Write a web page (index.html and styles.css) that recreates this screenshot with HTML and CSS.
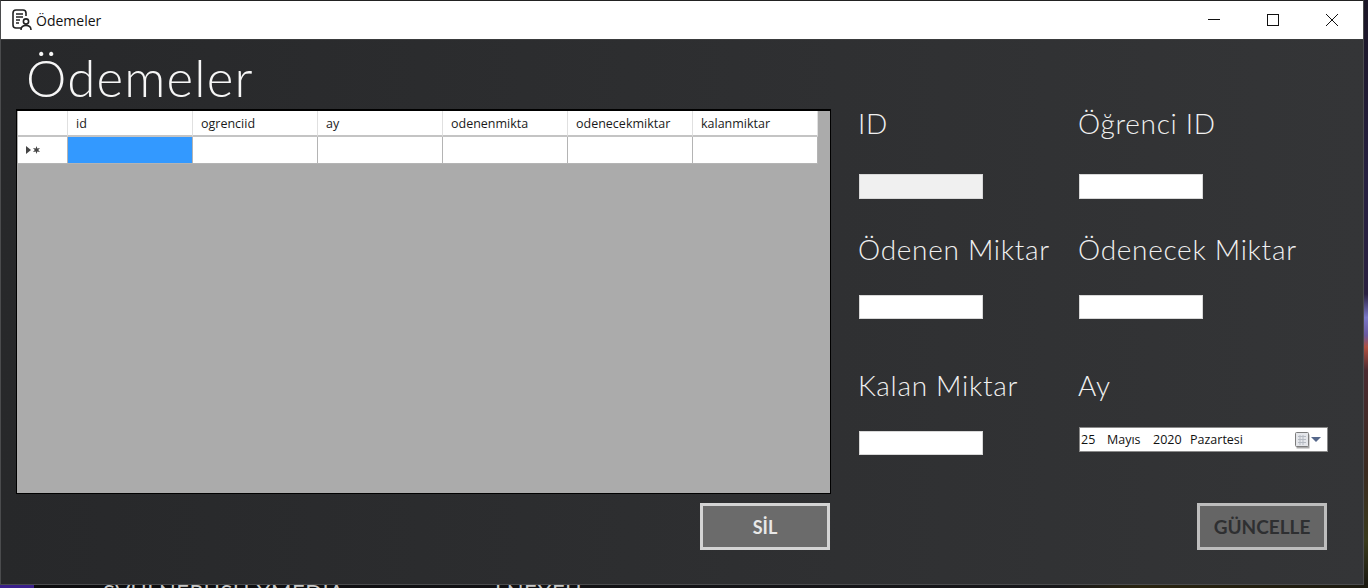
FILE: index.html
```html
<!DOCTYPE html>
<html lang="tr">
	<head>
		<meta charset="UTF-8" />
		<title>Ödemeler</title>
		<link rel="stylesheet" href="styles.css">
	</head>

	<body>
		<div class="window">
			<header class="titlebar">
				<svg class="app-icon" width="22" height="22" viewBox="0 0 22 22" fill="none" stroke="#222" stroke-width="1.6">
					<path d="M10 19H5a3 3 0 0 1-3-3V4a3 3 0 0 1 3-3h7a3 3 0 0 1 3 3v3" />
					<path d="M5 5h7M5 8h7M5 11h4M5 14h3" />
					<circle cx="15" cy="12.500" r="2.600" />
					<path d="M10 21c0-3 2-4.500 5-4.500s5 1.500 5 4.500" />
				</svg>
				<span class="window-title">Ödemeler</span>
				<div class="window-buttons">
					<svg width="12" height="12" viewBox="0 0 12 12" stroke="#111"><path d="M0 5.500h12" /></svg>
					<svg width="12" height="12" viewBox="0 0 12 12" stroke="#111" fill="none"><rect x=".5" y=".5" width="11" height="11" /></svg>
					<svg width="12" height="12" viewBox="0 0 12 12" stroke="#111"><path d="M0 0l12 12M12 0L0 12" /></svg>
				</div>
			</header>

			<div class="content">
				<h1>Ödemeler</h1>
				<div class="main">
					<section class="list-side">
						<div class="grid-panel">
							<table class="data-grid">
								<thead>
									<tr>
										<th class="row-head"></th>
										<th>id</th>
										<th>ogrenciid</th>
										<th>ay</th>
										<th>odenenmikta</th>
										<th>odenecekmiktar</th>
										<th>kalanmiktar</th>
									</tr>
								</thead>
								<tbody>
									<tr>
										<td class="row-head">
											<svg width="15" height="8" viewBox="0 0 15 8" fill="#444"><path d="M0 0l5 4-5 4z" /><path d="M10.500 0l.8 2.500 2.700-.6-1.800 2.100 1.800 2.100-2.700-.6-.8 2.500-.8-2.500-2.700.6 1.800-2.100-1.800-2.100 2.700.6z" /></svg>
										</td>
										<td class="selected"></td>
										<td></td>
										<td></td>
										<td></td>
										<td></td>
										<td></td>
									</tr>
								</tbody>
							</table>
						</div>
						<button class="action-btn delete-btn">SİL</button>
					</section>

					<form class="edit-form">
						<div class="field first">
							<label>ID</label>
							<input class="text-box" type="text" disabled>
						</div>
						<div class="field first">
							<label>Öğrenci ID</label>
							<input class="text-box" type="text">
						</div>
						<div class="field">
							<label>Ödenen Miktar</label>
							<input class="text-box short" type="text">
						</div>
						<div class="field">
							<label>Ödenecek Miktar</label>
							<input class="text-box short" type="text">
						</div>
						<div class="field">
							<label>Kalan Miktar</label>
							<input class="text-box short" type="text">
						</div>
						<div class="field date-field">
							<label>Ay</label>
							<div class="date-picker">
								<span class="date-day">25</span>
								<span class="date-month">Mayıs</span>
								<span class="date-year">2020</span>
								<span>Pazartesi</span>
								<svg class="date-icon" width="28" height="18" viewBox="0 0 28 18">
									<rect x="2.500" y="3.500" width="13" height="14" fill="#aaa" stroke="none" />
									<rect x="1.500" y="1.500" width="13" height="14" rx="1" fill="#e4e6ea" stroke="#7c7c7c" />
									<path d="M4 5.500h8M4 8.500h8M4 11.500h8M6 4v10M9 4v10" stroke="#b5bac2" />
									<path d="M17 6h10l-5 5z" fill="#55678a" />
								</svg>
							</div>
						</div>
						<button type="button" class="action-btn update-btn" disabled>GÜNCELLE</button>
					</form>
				</div>
			</div>
		</div>

		<div class="desktop-strip">
			<span class="desktop-text one">SVULNERUSH XMEDIA</span>
			<span class="desktop-text two">LNEXEU</span>
		</div>
	</body>
</html>
```

FILE: styles.css
```css
:root {
	--win-border: #4a4b4d;
	--label: #f0f0f0;
	--cell-line: #b4b4b4;
}

html, body {
	margin: 0;
	padding: 0;
}

body {
	position: relative;
	width: 1368px;
	height: 588px;
	overflow: hidden;
	background: linear-gradient(180deg, #1b1626 0%, #262040 30%, #2a2040 50%, #7a78c8 54%, #6a5aa0 57%, #b05040 59%, #4a2a30 63%, #3a2a20 80%, #3a3a1c 92%, #18160f 100%);
	font-family: "Open Sans", sans-serif;
}

.window {
	box-sizing: border-box;
	width: 1364px;
	height: 585px;
	border: 1px solid var(--win-border);
	border-top-color: #222;
	display: flex;
	flex-direction: column;
	background: linear-gradient(90deg, #27282a, #343537);
}

.titlebar {
	height: 38px;
	flex-shrink: 0;
	background: #fff;
	display: flex;
	align-items: center;
	padding-left: 10px;
	border-bottom: 1px solid #3a3b3d;
}
.app-icon {
	margin-right: 3px;
}
.window-title {
	font-size: 14px;
	color: #111;
}
.window-buttons {
	margin-left: auto;
	display: flex;
	gap: 47px;
	padding-right: 25px;
}

.content {
	flex-grow: 1;
	padding-left: 15px;
}

h1 {
	margin: 0;
	height: 69px;
	padding-left: 10px;
	font-family: Lato, sans-serif;
	font-weight: 300;
	font-size: 51px;
	line-height: 76px;
	letter-spacing: 1.2px;
	color: #f6f6f6;
}

.main {
	display: flex;
	align-items: flex-start;
}

.list-side {
	width: 815px;
	display: flex;
	flex-direction: column;
}
.grid-panel {
	box-sizing: border-box;
	height: 385px;
	background: #ababab;
	border: 1px solid #000;
	border-top-width: 2px;
	padding-left: 1px;
}
.data-grid {
	table-layout: fixed;
	width: 800px;
	border-collapse: separate;
	border-spacing: 0;
	font-size: 12.500px;
	color: #1a1a1a;
}
.data-grid th,
.data-grid td {
	box-sizing: border-box;
	width: 125px;
	padding: 0 0 0 8px;
	background: #fff;
	font-weight: 400;
	text-align: left;
	border-right: 1px solid var(--cell-line);
	border-bottom: 1px solid var(--cell-line);
}
.data-grid th {
	height: 26px;
	border-bottom: 2px solid #c4c4c4;
	border-right-color: #e0e0e0;
}
.data-grid td {
	height: 27px;
}
.data-grid .row-head {
	width: 50px;
}
.data-grid .selected {
	background: #3399ff;
}
.data-grid td svg {
	display: block;
}

.action-btn {
	box-sizing: border-box;
	width: 130px;
	height: 47px;
	border: 3px solid #d4d4d4;
	background: #6b6b6b;
	color: #e8e8e8;
	font-family: Lato, sans-serif;
	font-weight: 700;
	font-size: 18px;
	padding: 0;
}
.delete-btn {
	align-self: flex-end;
	margin: 9px 1px 0 0;
}
.update-btn {
	justify-self: end;
	grid-column: 2;
	border-color: #bdbdbd;
	background: #656565;
	color: #2e2f31;
	font-size: 19px;
}

.edit-form {
	width: 468px;
	margin-left: 28px;
	display: grid;
	grid-template-columns: 220px 248px;
	grid-template-rows: 126px 136px 132px auto;
}
.field {
	display: flex;
	flex-direction: column;
	align-items: flex-start;
	gap: 30px;
}
.field.first {
	gap: 35px;
}
.field label {
	height: 30px;
	margin-left: -1px;
	font-family: Lato, sans-serif;
	font-weight: 300;
	font-size: 28px;
	line-height: 28px;
	letter-spacing: .7px;
	color: var(--label);
	white-space: nowrap;
}
.text-box {
	box-sizing: border-box;
	width: 124px;
	height: 25px;
	margin: 0;
	padding: 0;
	background: #fff;
	border: 1px solid #d8d8d8;
	border-radius: 0;
}
.text-box.short {
	height: 24px;
}
.text-box:disabled {
	background: #f0f0f0;
}

.date-field {
	gap: 26px;
}
.date-picker {
	box-sizing: border-box;
	width: 249px;
	height: 25px;
	background: #fff;
	border: 1px solid #8a8a8a;
	display: flex;
	align-items: center;
	padding-left: 1px;
	font-size: 12.500px;
	color: #111;
}
.date-day {
	width: 26px;
}
.date-month {
	width: 46px;
}
.date-year {
	width: 37px;
}
.date-icon {
	margin-left: auto;
	margin-right: 5px;
}

.desktop-strip {
	position: absolute;
	left: 0;
	right: 0;
	top: 585px;
	height: 3px;
	overflow: hidden;
	background: linear-gradient(90deg, #3a1f8a 0, #3a1f8a 34px, #0c0c0e 34px, #17171a 1060px, #2a2410 1140px, #1c1a10 100%);
}
.desktop-text {
	position: absolute;
	top: -4px;
	font-family: Lato, sans-serif;
	font-size: 22px;
	line-height: 22px;
	color: #c8c8c8;
	white-space: nowrap;
}
.desktop-text.one {
	left: 103px;
	letter-spacing: .5px;
}
.desktop-text.two {
	left: 495px;
	letter-spacing: .5px;
}
```
